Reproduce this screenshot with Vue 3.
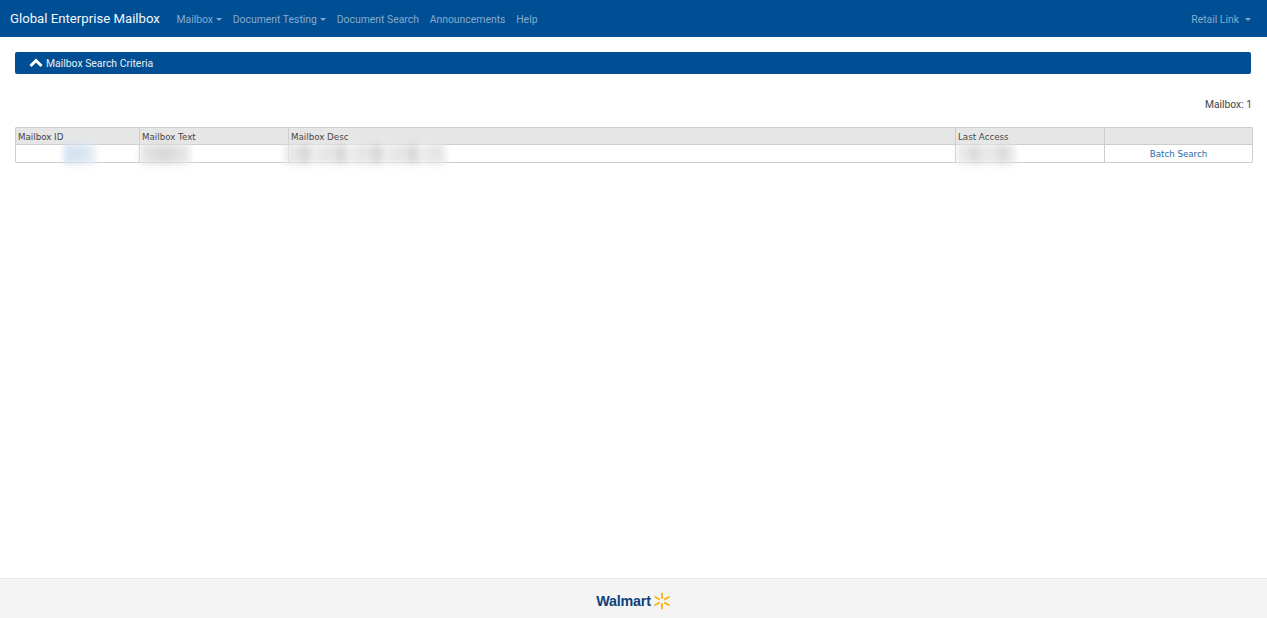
<template>
  <div class="page">
    <nav class="navbar">
      <span class="brand">Global Enterprise Mailbox</span>
      <ul class="nav-links">
        <li v-for="item in navItems" :key="item.label" :class="{ caret: item.menu }">{{ item.label }}</li>
      </ul>
      <span class="retail caret">Retail Link</span>
    </nav>

    <main class="content">
      <div class="criteria">
        <svg class="chevron" width="14" height="10" viewBox="0 0 14 10">
          <path d="M1.5 8 7 2.5 12.5 8" fill="none" stroke="#fff" stroke-width="3" />
        </svg>
        <span>Mailbox Search Criteria</span>
      </div>

      <div class="count">Mailbox: 1</div>

      <div class="grid">
        <div class="row head">
          <div v-for="col in columns" :key="col" class="cell">{{ col }}</div>
        </div>
        <div class="row body">
          <div class="cell"><span class="smudge blue"></span></div>
          <div class="cell"><span class="smudge text"></span></div>
          <div class="cell"><span class="smudge desc"></span></div>
          <div class="cell"><span class="smudge access"></span></div>
          <div class="cell action"><a href="#">Batch Search</a></div>
        </div>
      </div>
    </main>

    <footer class="footer">
      <span class="wordmark">Walmart</span>
      <svg class="spark" width="18" height="18" viewBox="0 0 18 18">
        <g stroke="#fcb61a" stroke-width="2" stroke-linecap="round">
          <path d="M9 1.5V6" />
          <path d="M9 12v4.5" />
          <path d="M2.2 5 6 7.2" />
          <path d="M12 10.8 15.8 13" />
          <path d="M2.2 13 6 10.8" />
          <path d="M12 7.2 15.8 5" />
        </g>
      </svg>
    </footer>
  </div>
</template>

<script setup>
const navItems = [
  { label: 'Mailbox', menu: true },
  { label: 'Document Testing', menu: true },
  { label: 'Document Search' },
  { label: 'Announcements' },
  { label: 'Help' }
]

const columns = ['Mailbox ID', 'Mailbox Text', 'Mailbox Desc', 'Last Access', '']
</script>

<style>
html,
body {
  margin: 0;
  background: #fff;
}
</style>

<style scoped>
.page {
  height: 618px;
  display: flex;
  flex-direction: column;
  overflow: hidden;
  font-family: Roboto, "Liberation Sans", sans-serif;
}

.navbar {
  height: 37px;
  flex: none;
  display: flex;
  align-items: center;
  padding: 0 16px 0 10px;
  background: #004f94;
  color: #fff;
}

.brand {
  font-size: 13.2px;
  margin-right: 16.5px;
  color: #f4f7fa;
}

.nav-links {
  display: flex;
  gap: 10.8px;
  list-style: none;
  margin: 0;
  padding: 1px 0 0;
  font-size: 10.4px;
  color: #86aacd;
}

.retail {
  margin-left: auto;
  padding-top: 1px;
  font-size: 10.4px;
  color: #86aacd;
}

.caret::after {
  content: "";
  display: inline-block;
  margin-left: 3px;
  vertical-align: 2px;
  border-top: 3.5px solid currentColor;
  border-left: 3.5px solid transparent;
  border-right: 3.5px solid transparent;
}

.retail.caret::after {
  margin-left: 6px;
}

.content {
  flex: 1;
  padding: 15px 14px 0 15px;
}

.criteria {
  height: 22px;
  margin-right: 2px;
  display: flex;
  align-items: center;
  gap: 3px;
  padding-left: 14px;
  border-radius: 2px;
  background: #004f94;
  color: #e8eff6;
  font-size: 10.4px;
}

.count {
  margin-top: 24px;
  padding-right: 1px;
  text-align: right;
  font-size: 10.3px;
  line-height: 14px;
  color: #444;
}

.grid {
  margin-top: 15px;
  border: 1px solid #cdcdcd;
  border-radius: 1px;
  font-family: "DejaVu Sans", sans-serif;
  font-size: 8.7px;
  color: #444;
}

.row {
  display: grid;
  grid-template-columns: 124px 149px 667px 149px 1fr;
  box-sizing: border-box;
}

.head {
  height: 17px;
  grid-template-rows: 16px;
  background: #e6e6e6;
  border-bottom: 1px solid #cdcdcd;
}

.head .cell {
  padding-top: 1px;
}

.body {
  height: 17px;
  grid-template-rows: 17px;
  background: #fff;
}

.cell {
  position: relative;
  display: flex;
  align-items: center;
  padding-left: 2px;
  border-right: 1px solid #cdcdcd;
  min-width: 0;
}

.cell:last-child {
  border-right: 0;
}

.action {
  justify-content: center;
  padding-left: 0;
}

.action a {
  color: #2a6ba8;
  text-decoration: none;
}

.smudge {
  display: block;
  flex: none;
  height: 20px;
  filter: blur(3.5px);
}

.blue {
  width: 32px;
  margin-left: 46px;
  background: linear-gradient(90deg, #cfe0ef, #d8e5f1 60%, #eaf0f6);
}

.text {
  width: 50px;
  margin-left: -2px;
  background: linear-gradient(90deg, #e6e6e6, #d8d8d8 50%, #e9e9e9);
}

.desc {
  width: 160px;
  margin-left: -6px;
  background: repeating-linear-gradient(90deg, #e6e6e6 0 16px, #d6d6d6 16px 24px, #ececec 24px 36px);
}

.access {
  width: 58px;
  margin-left: -1px;
  background: repeating-linear-gradient(90deg, #e8e8e8 0 14px, #d8d8d8 14px 20px, #e6e6e6 20px 28px);
}

.footer {
  height: 40px;
  flex: none;
  display: flex;
  align-items: center;
  justify-content: center;
  gap: 2px;
  padding-top: 5px;
  background: #f4f4f4;
  border-top: 1px solid #e7e7e7;
  box-sizing: border-box;
}

.wordmark {
  font-family: "Liberation Sans", sans-serif;
  font-weight: 700;
  font-size: 14.3px;
  letter-spacing: -0.2px;
  color: #0f3f78;
}
</style>
